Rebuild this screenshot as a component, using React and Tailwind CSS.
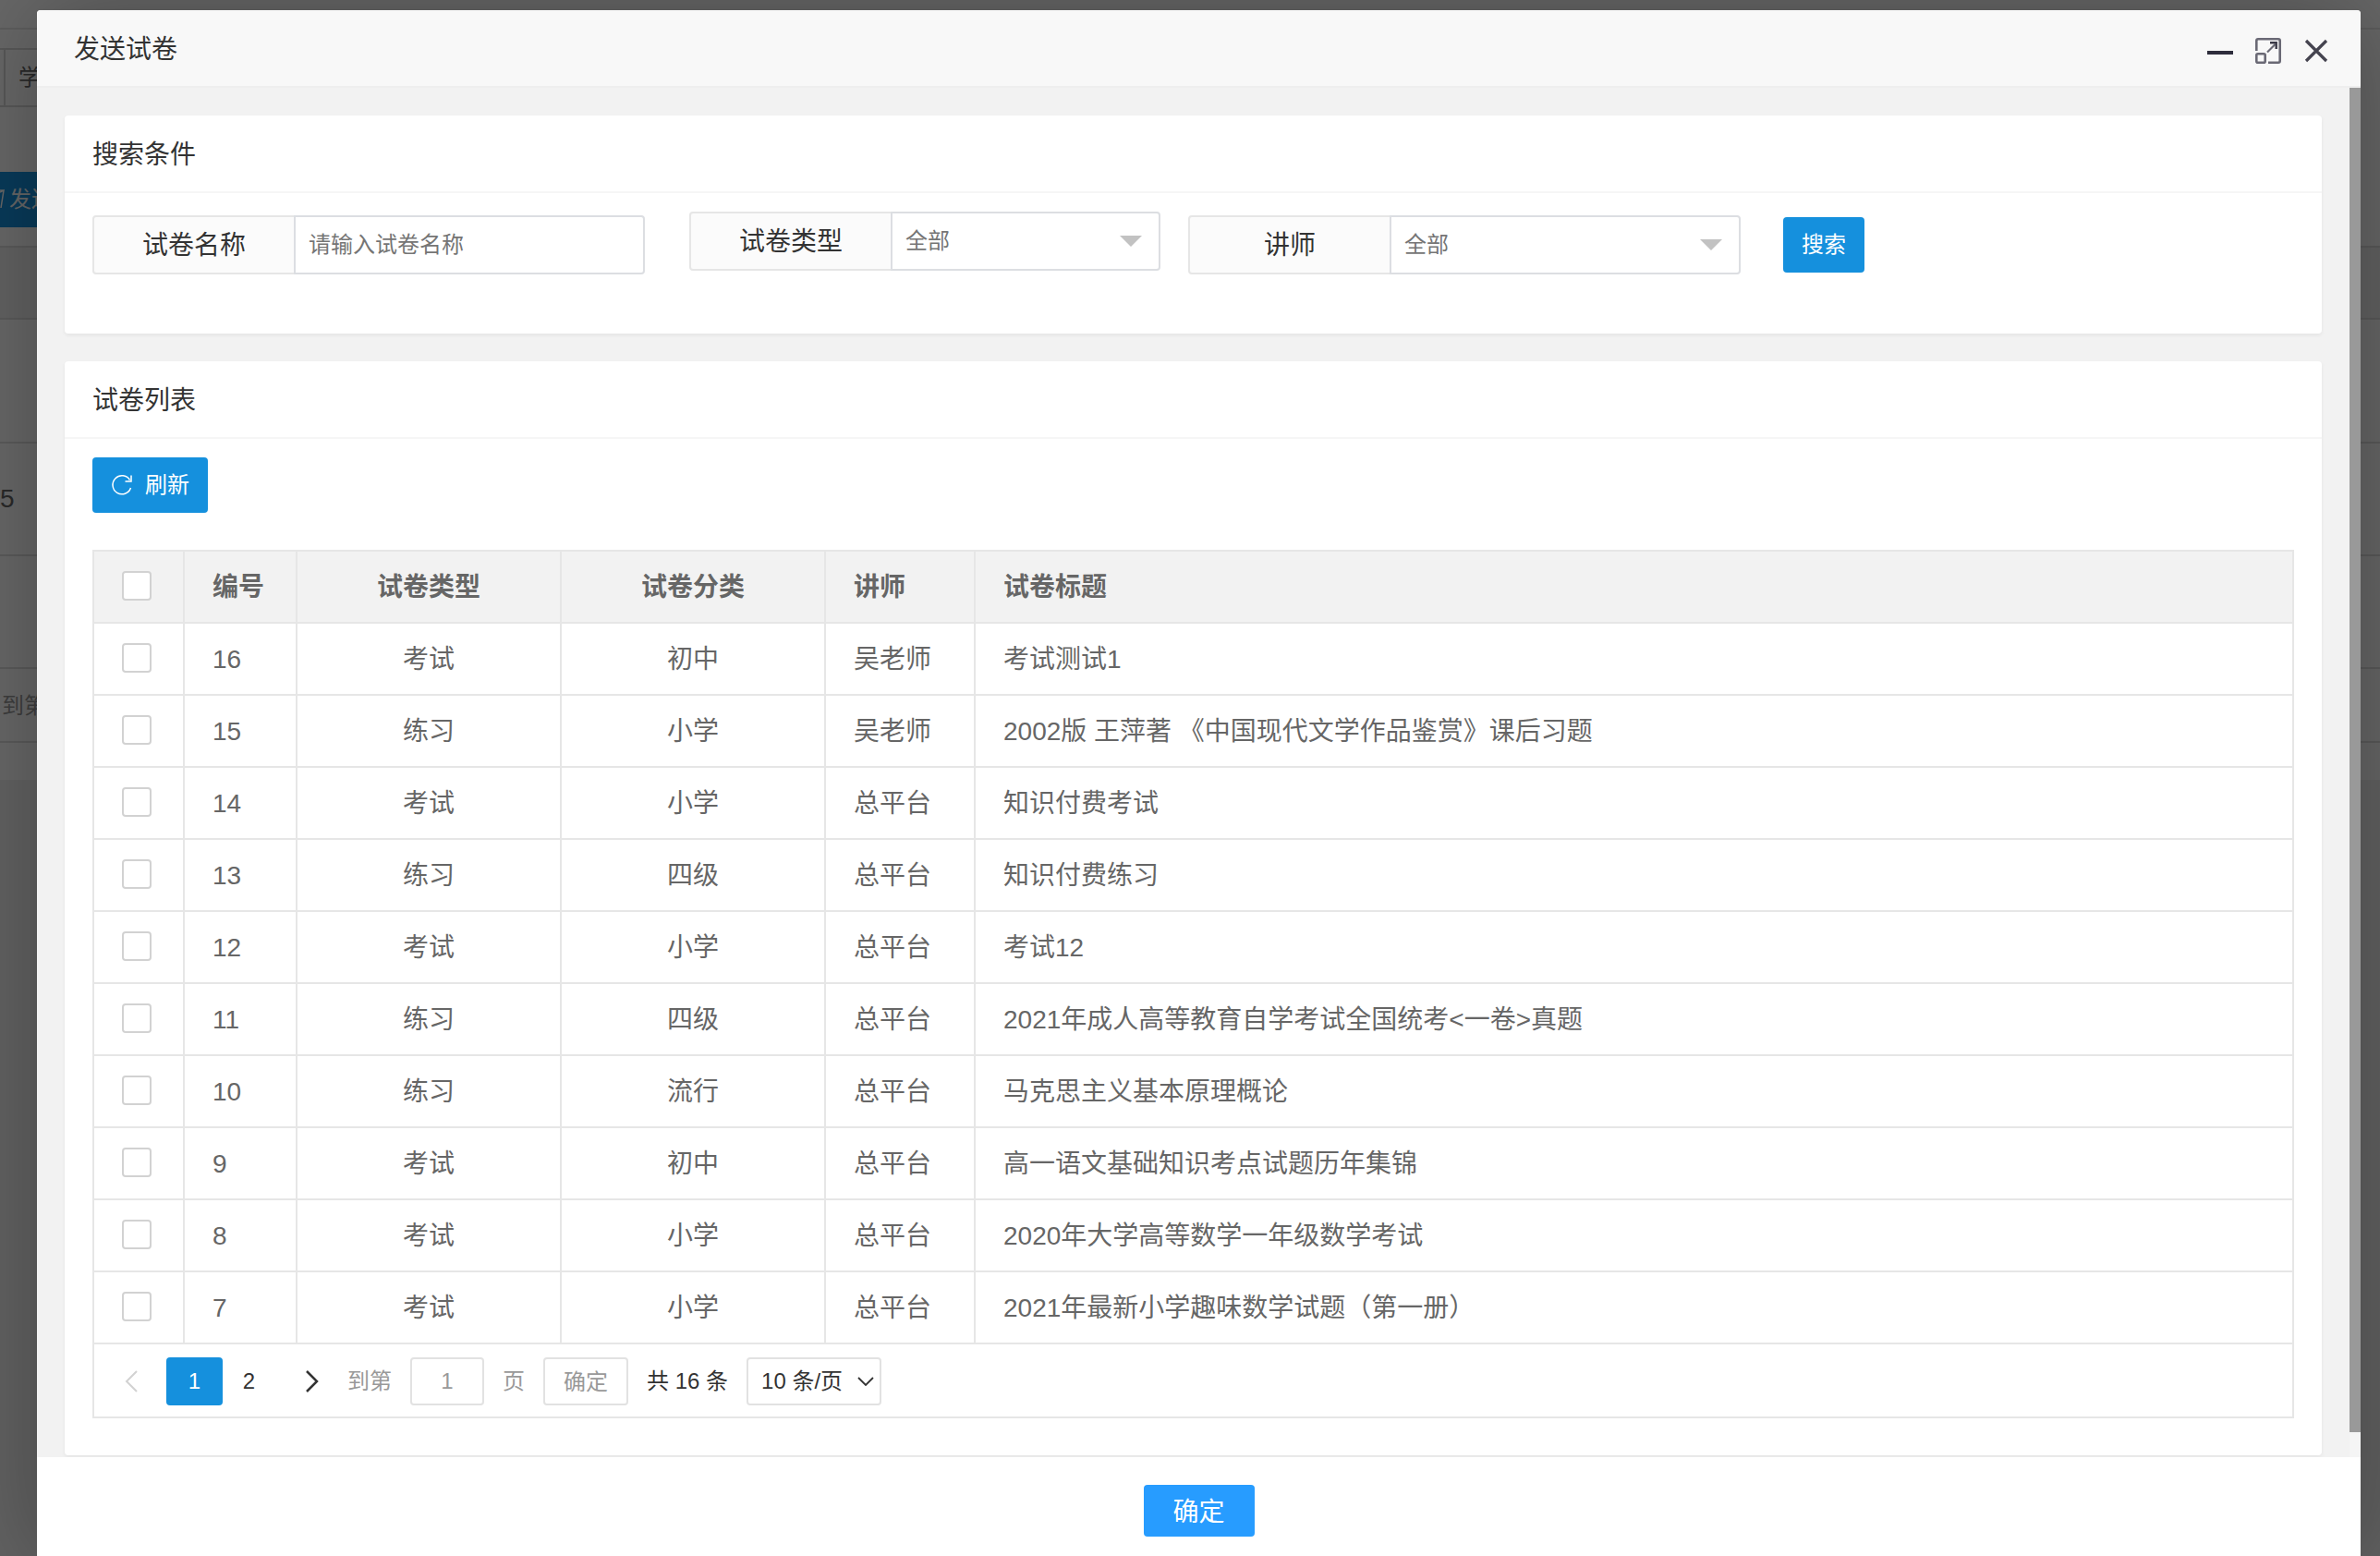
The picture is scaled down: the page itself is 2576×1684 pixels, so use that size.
import { useState } from "react";
import cx from "clsx";

const papers = [
  { id: 16, type: "考试", category: "初中", teacher: "吴老师", title: "考试测试1" },
  { id: 15, type: "练习", category: "小学", teacher: "吴老师", title: "2002版 王萍著 《中国现代文学作品鉴赏》课后习题" },
  { id: 14, type: "考试", category: "小学", teacher: "总平台", title: "知识付费考试" },
  { id: 13, type: "练习", category: "四级", teacher: "总平台", title: "知识付费练习" },
  { id: 12, type: "考试", category: "小学", teacher: "总平台", title: "考试12" },
  { id: 11, type: "练习", category: "四级", teacher: "总平台", title: "2021年成人高等教育自学考试全国统考<一卷>真题" },
  { id: 10, type: "练习", category: "流行", teacher: "总平台", title: "马克思主义基本原理概论" },
  { id: 9, type: "考试", category: "初中", teacher: "总平台", title: "高一语文基础知识考点试题历年集锦" },
  { id: 8, type: "考试", category: "小学", teacher: "总平台", title: "2020年大学高等数学一年级数学考试" },
  { id: 7, type: "考试", category: "小学", teacher: "总平台", title: "2021年最新小学趣味数学试题（第一册）" },
];

const Card = ({ title, className, children }) => (
  <section className={cx("rounded bg-white shadow-[0_2px_4px_rgba(0,0,0,0.06)]", className)}>
    <h2 className="flex h-[84px] items-center border-b-2 border-[#f6f6f6] px-[30px] pt-1 text-[28px] leading-10">
      {title}
    </h2>
    <div className="px-[30px]">{children}</div>
  </section>
);

const Field = ({ id, label, className, children }) => (
  <div className={cx("flex h-16", className)}>
    <label
      htmlFor={id}
      className="flex w-[220px] shrink-0 items-center justify-center rounded-l border-2 border-[#e6e6e6] bg-[#fbfbfb] pt-0.5 text-[28px] leading-10"
    >
      {label}
    </label>
    {children}
  </div>
);

const SelectBox = ({ id }) => (
  <div className="relative -ml-0.5 flex-1">
    <select
      id={id}
      className="h-full w-full appearance-none rounded-r border-2 border-[#dcdee2] bg-white px-3.5 text-2xl text-[#757575]"
    >
      <option>全部</option>
    </select>
    <svg viewBox="0 0 24 12" className="pointer-events-none absolute top-[26px] right-5 h-3 w-6">
      <path d="M0 0h24L12 12z" fill="#c2c2c2" />
    </svg>
  </div>
);

const Check = ({ label }) => (
  <input
    type="checkbox"
    aria-label={label}
    className="block h-8 w-8 appearance-none rounded border-2 border-[#d2d2d2] bg-white checked:bg-[#1590dd]"
  />
);

const Backdrop = () => (
  <div className="bg-[#f2f2f2] text-[#666666]" aria-hidden="true">
    <div className="h-8 border-b-2 border-[#e6e6e6] bg-white" />
    <div className="h-[154px] bg-white pt-5">
      <div className="flex h-16 w-[400px] items-center border-y-2 border-[#d8d8d8] text-2xl">
        <span className="h-full w-1.5 border-r-2 border-[#d8d8d8]" />
        <span className="pl-3.5">学员</span>
      </div>
    </div>
    <div className="bg-white pb-5">
      <div className="flex h-[60px] w-[200px] items-center bg-[#1590dd] text-2xl text-white">
        <svg viewBox="0 0 8 24" className="h-6 w-2" fill="none" stroke="#fff" strokeWidth="1.5">
          <path d="M0 4l4-2L1 21M4 2h-4" />
        </svg>
        <span className="pl-0.5">发送</span>
      </div>
    </div>
    <div className="h-20 border-y-2 border-[#dedede] bg-[#f2f2f2]" />
    <div className="h-[134px] border-b-2 border-[#dedede] bg-white" />
    <div className="flex h-[122px] items-center border-b-2 border-[#dedede] bg-white text-[28px]">5</div>
    <div className="h-[122px] border-b-2 border-[#dedede] bg-white" />
    <div className="h-20 border-b-2 border-[#dedede] bg-white pt-6 pl-0.5 text-2xl text-[#999999]">
      到第
    </div>
    <div className="h-10 bg-white" />
  </div>
);

const TitleBar = () => (
  <header className="flex h-[84px] shrink-0 items-center justify-between rounded-t border-b-2 border-[#eeeeee] bg-[#f8f8f8] pt-1 pr-[34px] pl-10">
    <h1 className="text-[28px] leading-10">发送试卷</h1>
    <div className="flex items-center gap-6 pt-0.5">
      <button aria-label="最小化" className="h-7 w-7">
        <svg viewBox="0 0 28 28" className="h-7 w-7">
          <path d="M0 14h28v4H0z" fill="#2e2d3c" />
        </svg>
      </button>
      <button aria-label="最大化" className="h-7 w-7">
        <svg viewBox="0 0 28 28" className="h-7 w-7" fill="none" stroke="#6a6975" strokeWidth="2.6">
          <path d="M1.3 14V3q0-1.7 1.7-1.7h22q1.7 0 1.7 1.7v22q0 1.7-1.7 1.7H14" />
          <rect x="1.3" y="17.3" width="9.4" height="9.4" rx="1.5" />
          <path d="M13 15.5L21.5 7" strokeWidth="2.2" />
          <path d="M16 5.3h6.7V12" stroke="#3a3947" strokeWidth="2.4" />
        </svg>
      </button>
      <button aria-label="关闭" className="h-7 w-7">
        <svg viewBox="0 0 28 28" className="h-7 w-7" fill="none" stroke="#44434f" strokeWidth="3.2">
          <path d="M3 3l22 22M25 3L3 25" />
        </svg>
      </button>
    </div>
  </header>
);

const SearchCard = () => (
  <Card title="搜索条件" className="min-h-[236px]">
    <form className="flex items-start pt-5" onSubmit={(e) => e.preventDefault()}>
      <Field id="paper-name" label="试卷名称" className="mt-1 w-[598px]">
        <input
          id="paper-name"
          placeholder="请输入试卷名称"
          className="-ml-0.5 min-w-0 flex-1 rounded-r border-2 border-[#dcdee2] bg-white px-3.5 text-2xl placeholder:text-[#757575]"
        />
      </Field>
      <Field id="paper-type" label="试卷类型" className="ml-12 w-[510px]">
        <SelectBox id="paper-type" />
      </Field>
      <Field id="teacher" label="讲师" className="mt-1 ml-[30px] w-[598px]">
        <SelectBox id="teacher" />
      </Field>
      <button className="mt-1.5 ml-[46px] h-[60px] rounded bg-[#1590dd] px-5 text-2xl text-white">搜索</button>
    </form>
  </Card>
);

const cell = "h-[78px] border-r-2 border-b-2 border-[#e6e6e6] px-[30px] leading-10";
const textCell = cx(cell, "pt-0.5 pb-0");
const checkCell = cx(cell, "pt-0 pb-0.5");

const PaperTable = () => (
  <table className="w-full table-fixed border-separate border-spacing-0 border-t-2 border-l-2 border-[#e6e6e6] text-left text-[28px] text-[#666666]">
    <colgroup>
      <col className="w-[98px]" />
      <col className="w-[122px]" />
      <col className="w-[286px]" />
      <col className="w-[286px]" />
      <col className="w-[162px]" />
      <col />
    </colgroup>
    <thead className="bg-[#f2f2f2]">
      <tr>
        <th className={checkCell}>
          <Check label="全选" />
        </th>
        <th className={textCell}>编号</th>
        <th className={cx(textCell, "text-center")}>试卷类型</th>
        <th className={cx(textCell, "text-center")}>试卷分类</th>
        <th className={textCell}>讲师</th>
        <th className={textCell}>试卷标题</th>
      </tr>
    </thead>
    <tbody>
      {papers.map((paper) => (
        <tr key={paper.id}>
          <td className={checkCell}>
            <Check label={paper.title} />
          </td>
          <td className={textCell}>{paper.id}</td>
          <td className={cx(textCell, "text-center")}>{paper.type}</td>
          <td className={cx(textCell, "text-center")}>{paper.category}</td>
          <td className={cx(textCell, "whitespace-nowrap")}>{paper.teacher}</td>
          <td className={textCell}>{paper.title}</td>
        </tr>
      ))}
    </tbody>
  </table>
);

const Pager = () => {
  const [page, setPage] = useState(1);

  return (
    <nav className="flex h-20 items-start border-2 border-t-0 border-[#e6e6e6] pt-3.5 pl-5 text-2xl">
      <button aria-label="上一页" className="flex h-[52px] w-[58px] items-center pl-3" onClick={() => setPage(1)}>
        <svg viewBox="0 0 16 24" className="h-6 w-4" fill="none" stroke="#d2d2d2" strokeWidth="2">
          <path d="M14 1L3 12l11 11" />
        </svg>
      </button>
      {[1, 2].map((n) => (
        <button
          key={n}
          onClick={() => setPage(n)}
          className={cx("h-[52px] rounded", n === page ? "w-[61px] bg-[#1590dd] text-white" : "w-[57px]")}
        >
          {n}
        </button>
      ))}
      <button aria-label="下一页" className="flex h-[52px] w-[78px] items-center pl-8" onClick={() => setPage(2)}>
        <svg viewBox="0 0 16 24" className="h-6 w-4" fill="none" stroke="#333333" strokeWidth="2.5">
          <path d="M2 1l11 11L2 23" />
        </svg>
      </button>
      <div className="flex h-[52px] items-center text-[#999999]">
        <label htmlFor="jump">到第</label>
        <input
          id="jump"
          defaultValue="1"
          className="mx-5 h-[52px] w-20 rounded border-2 border-[#e2e2e2] bg-white text-center"
        />
        <span>页</span>
        <button className="ml-5 h-[52px] rounded border-2 border-[#e2e2e2] px-5 pt-0.5">确定</button>
      </div>
      <span className="ml-5 leading-[52px]">共 16 条</span>
      <div className="relative ml-5">
        <select
          aria-label="每页条数"
          className="h-[52px] w-[146px] appearance-none rounded border-2 border-[#e2e2e2] bg-white pl-3.5"
        >
          <option>10 条/页</option>
        </select>
        <svg
          viewBox="0 0 18 10"
          className="pointer-events-none absolute top-[21px] right-2 h-2.5 w-[18px]"
          fill="none"
          stroke="#333333"
          strokeWidth="1.8"
        >
          <path d="M1 1l8 8 8-8" />
        </svg>
      </div>
    </nav>
  );
};

const ListCard = () => (
  <Card title="试卷列表" className="pb-10">
    <button className="mt-5 mb-10 flex h-[60px] items-center gap-[13px] rounded bg-[#1590dd] px-5 text-2xl text-white">
      <svg viewBox="0 0 24 24" className="h-6 w-6" fill="none" stroke="#fff" strokeWidth="1.5">
        <path d="M21.5 15A10 10 0 1 1 20.5 6.5" />
        <path d="M22 1.5V8h-6.5" />
      </svg>
      刷新
    </button>
    <PaperTable />
    <Pager />
  </Card>
);

const App = () => (
  <div className="relative h-screen overflow-hidden bg-[#f2f2f2] font-['Liberation_Sans','Noto_Sans_CJK_SC',sans-serif] text-[#333333]">
    <Backdrop />
    <div className="fixed inset-0 bg-black/60 pt-[11px] pr-[21px] pl-10">
      <div
        role="dialog"
        aria-label="发送试卷"
        className="flex h-full flex-col rounded-t bg-white shadow-[2px_2px_100px_rgba(0,0,0,0.3)]"
      >
        <TitleBar />
        <div className="flex shrink-0 bg-[#f2f2f2]">
          <main className="min-w-0 flex-1 space-y-[30px] px-[30px] pt-[30px] pb-0.5">
            <SearchCard />
            <ListCard />
          </main>
          <div className="flex w-3 bg-[#f5f5f5] pb-[27px]">
            <div className="flex-1 bg-[#999999]" />
          </div>
        </div>
        <footer className="flex flex-1 items-start justify-center bg-white pt-[30px]">
          <button className="h-14 w-[120px] rounded bg-[#279cff] pt-1 text-[28px] leading-10 text-white">
            确定
          </button>
        </footer>
      </div>
    </div>
  </div>
);

export default App;
